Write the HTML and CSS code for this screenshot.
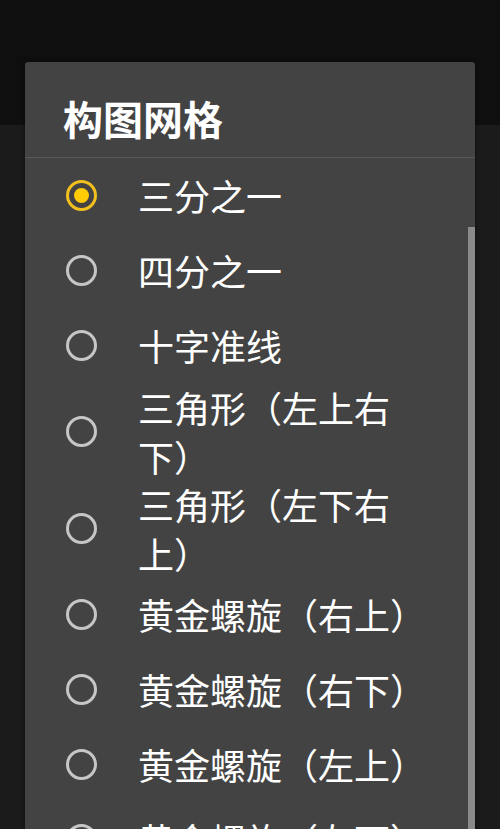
FILE: index.html
```html
<!DOCTYPE html>
<html lang="zh-CN">
<head>
<meta charset="utf-8">
<title>构图网格</title>
<link rel="stylesheet" href="styles.css">
</head>
<body>
<div class="screen">
  <div class="appbar"></div>
  <div class="content"></div>
  <div class="dialog">
    <div class="dialog-title">构图网格</div>
    <div class="divider"></div>
    <div class="list">
      <div class="item"><span class="radio checked"></span><span class="label">三分之一</span></div>
      <div class="item"><span class="radio"></span><span class="label">四分之一</span></div>
      <div class="item"><span class="radio"></span><span class="label">十字准线</span></div>
      <div class="item"><span class="radio"></span><span class="label">三角形（左上右下）</span></div>
      <div class="item"><span class="radio"></span><span class="label">三角形（左下右上）</span></div>
      <div class="item"><span class="radio"></span><span class="label">黄金螺旋（右上）</span></div>
      <div class="item"><span class="radio"></span><span class="label">黄金螺旋（右下）</span></div>
      <div class="item"><span class="radio"></span><span class="label">黄金螺旋（左上）</span></div>
      <div class="item"><span class="radio"></span><span class="label">黄金螺旋（左下）</span></div>
      <div class="scroll-thumb"></div>
    </div>
  </div>
</div>
</body>
</html>
```
FILE: styles.css
```css
html, body {
  margin: 0;
  padding: 0;
  width: 500px;
  height: 829px;
  overflow: hidden;
  background: #1b1b1b;
  font-family: "Noto Sans CJK SC", "Noto Sans", sans-serif;
}

.screen {
  position: relative;
  width: 500px;
  height: 829px;
  overflow: hidden;
}

.appbar {
  height: 125px;
  background: #0f0f0f;
}

.content {
  height: 704px;
  background: #1b1b1b;
}

.dialog {
  position: absolute;
  left: 25px;
  top: 62px;
  width: 450px;
  height: 900px;
  background: #434343;
  border-radius: 3px;
  box-shadow: 0 0 4px rgba(0, 0, 0, 0.5);
}

.dialog-title {
  color: #ffffff;
  font-size: 40px;
  font-weight: 700;
  line-height: 40px;
  padding: 36px 0 19px 38px;
}

.divider {
  height: 1px;
  background: #595959;
}

.list {
  position: relative;
}

.item {
  display: flex;
  align-items: center;
  min-height: 75px;
  padding: 0 25px 0 41px;
}

.radio {
  flex: none;
  box-sizing: border-box;
  width: 31px;
  height: 31px;
  border: 3px solid #c6c6c6;
  border-radius: 50%;
  margin-right: 41px;
  position: relative;
}

.radio.checked {
  border-color: #f2c01e;
}

.radio.checked::after {
  content: "";
  position: absolute;
  left: 5px;
  top: 5px;
  width: 15px;
  height: 15px;
  border-radius: 50%;
  background: #ffcb05;
}

.label {
  color: #ffffff;
  font-size: 36px;
  line-height: 48.5px;
  max-width: 310px;
  text-spacing-trim: space-all;
}

.scroll-thumb {
  position: absolute;
  right: 0;
  top: 69px;
  width: 7px;
  height: 700px;
  background: #8a8a8a;
}
```
